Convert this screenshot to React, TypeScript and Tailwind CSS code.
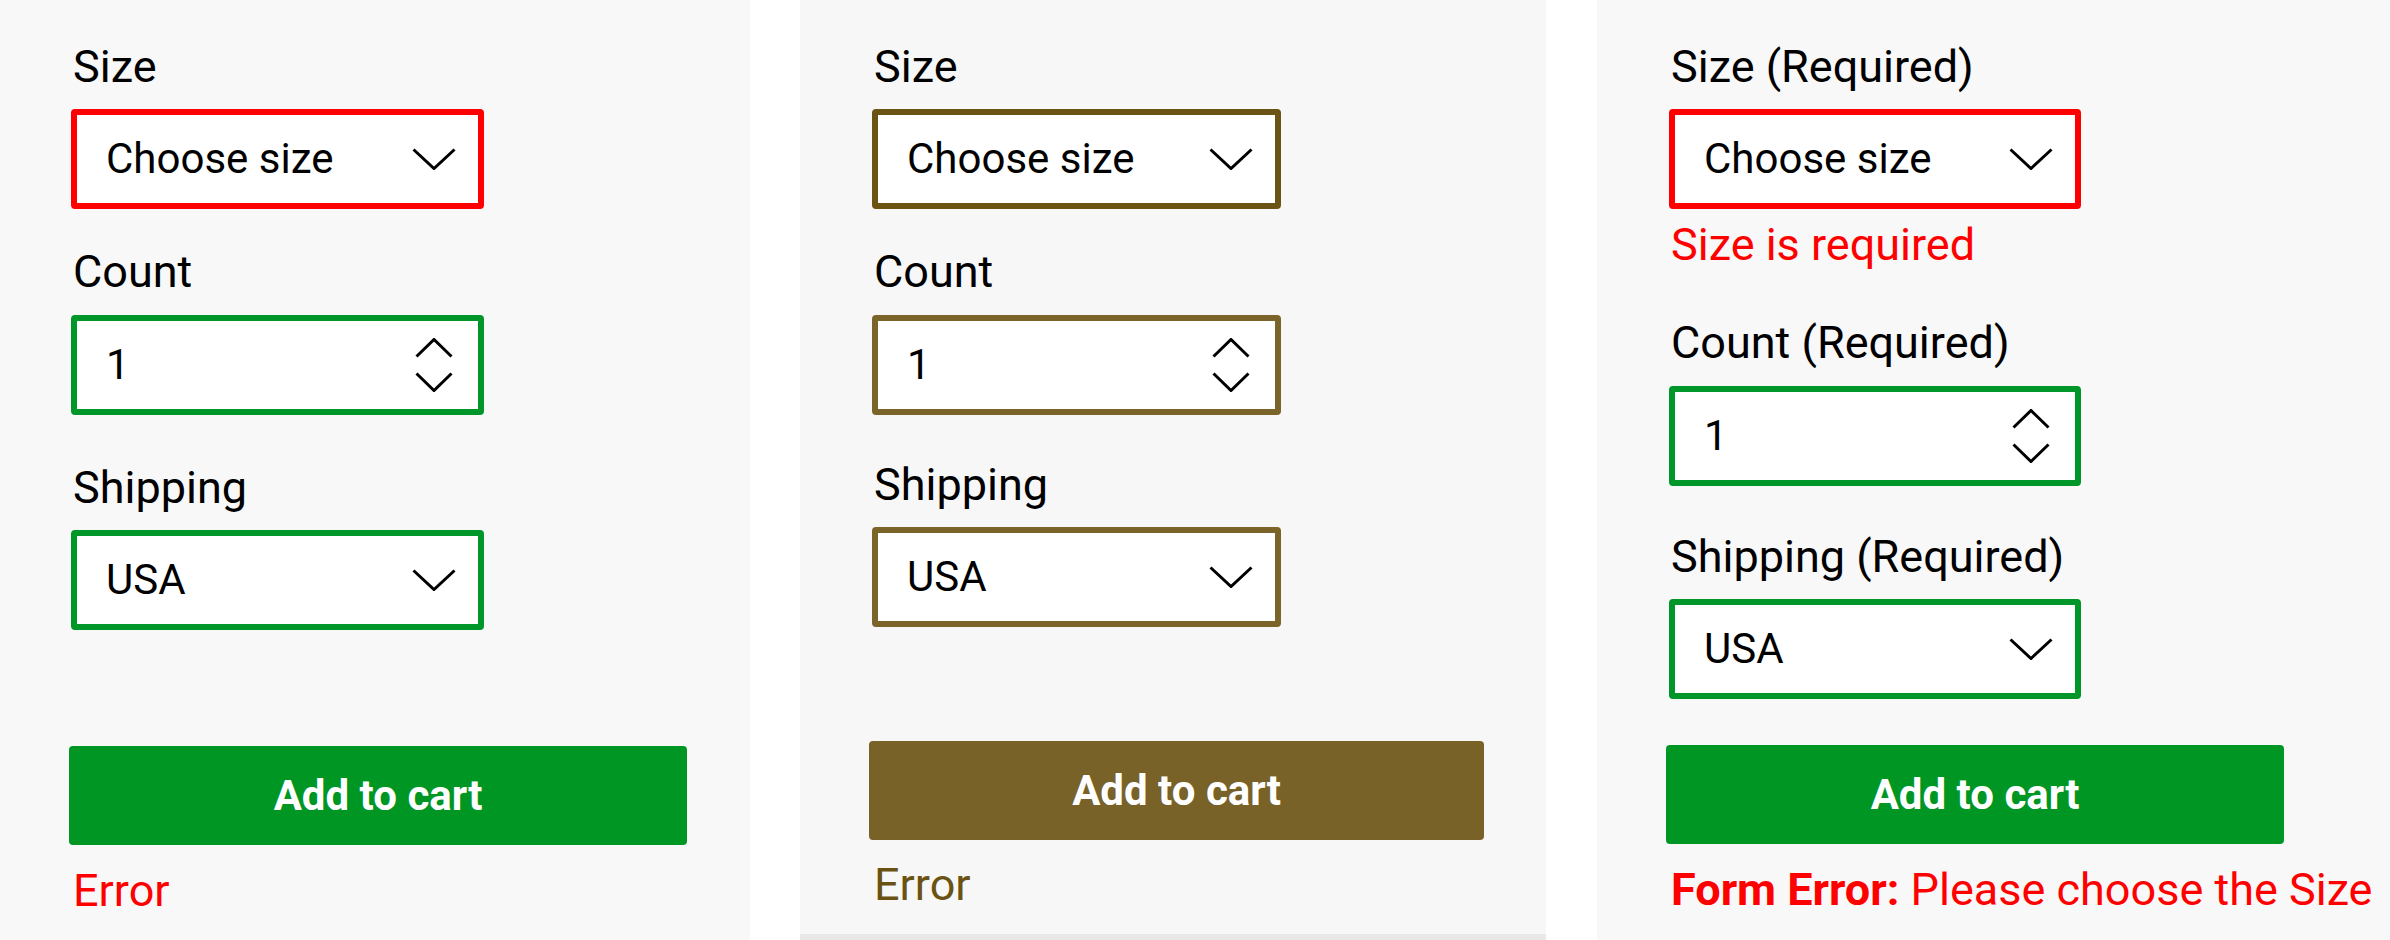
import React from "react";

type Theme = {
  ok: string;
  bad: string;
  button: string;
  error: string;
};

const green: Theme = {
  ok: "border-[#00962a]",
  bad: "border-[#ff0000]",
  button: "bg-[#009624]",
  error: "text-[#ff0000]",
};

const olive: Theme = {
  ok: "border-[#7a6429]",
  bad: "border-[#6b5413]",
  button: "bg-[#786227]",
  error: "text-[#6a5312]",
};

function ChevronDown() {
  return (
    <svg width="44" height="22" viewBox="0 0 44 22" fill="none">
      <path d="M1.5 1.5 L22 20.5 L42.5 1.5" stroke="#000" strokeWidth="3" />
    </svg>
  );
}

function Spinner() {
  return (
    <div className="flex flex-col items-center gap-[14px]">
      <svg width="38" height="20" viewBox="0 0 38 20" fill="none">
        <path d="M1.5 18.5 L19 1.5 L36.5 18.5" stroke="#000" strokeWidth="3" />
      </svg>
      <svg width="38" height="20" viewBox="0 0 38 20" fill="none">
        <path d="M1.5 1.5 L19 18.5 L36.5 1.5" stroke="#000" strokeWidth="3" />
      </svg>
    </div>
  );
}

function Label({ children, className = "" }: { children: React.ReactNode; className?: string }) {
  return <div className={`text-[45px] leading-[52px] text-black pl-[2px] ${className}`}>{children}</div>;
}

function Box({
  value,
  border,
  width,
  spinner,
  className = "",
}: {
  value: string;
  border: string;
  width: string;
  spinner?: boolean;
  className?: string;
}) {
  return (
    <div
      className={`h-[100px] ${width} border-[6px] ${border} rounded-[4px] bg-white flex items-center justify-between pl-[29px] pr-[22px] ${className}`}
    >
      <span className="text-[42px] text-black leading-none">{value}</span>
      <div className="w-[44px] flex justify-center">{spinner ? <Spinner /> : <ChevronDown />}</div>
    </div>
  );
}

function CartButton({ bg, width, className = "" }: { bg: string; width: string; className?: string }) {
  return (
    <button
      className={`h-[99px] ${width} ${bg} rounded-[4px] text-white font-bold text-[42px] flex items-center justify-center ${className}`}
    >
      Add to cart
    </button>
  );
}

export default function App() {
  return (
    <div className="w-[2390px] h-[940px] bg-white flex font-['Roboto',sans-serif] overflow-hidden">
      {/* Variant 1: green / red */}
      <div className="w-[750px] h-full bg-[#f8f8f8] pl-[71px] pt-[41px]">
        <Label>Size</Label>
        <Box value="Choose size" border={green.bad} width="w-[413px]" className="mt-[16px]" />
        <Label className="mt-[37px]">Count</Label>
        <Box value="1" border={green.ok} width="w-[413px]" spinner className="mt-[17px]" />
        <Label className="mt-[47px]">Shipping</Label>
        <Box value="USA" border={green.ok} width="w-[413px]" className="mt-[16px]" />
        <CartButton bg={green.button} width="w-[618px]" className="mt-[116px] -ml-[2px]" />
        <Label className="mt-[20px]">
          <span className={green.error}>Error</span>
        </Label>
      </div>

      <div className="w-[50px] shrink-0" />

      {/* Variant 2: olive */}
      <div className="w-[746px] h-full bg-[#f7f7f7] flex flex-col">
        <div className="flex-1 pl-[72px] pt-[41px]">
          <Label>Size</Label>
          <Box value="Choose size" border={olive.bad} width="w-[409px]" className="mt-[16px]" />
          <Label className="mt-[37px]">Count</Label>
          <Box value="1" border={olive.ok} width="w-[409px]" spinner className="mt-[17px]" />
          <Label className="mt-[44px]">Shipping</Label>
          <Box value="USA" border={olive.ok} width="w-[409px]" className="mt-[16px]" />
          <CartButton bg={olive.button} width="w-[615px]" className="mt-[114px] -ml-[3px]" />
          <Label className="mt-[19px]">
            <span className={olive.error}>Error</span>
          </Label>
        </div>
        <div className="h-[6px] bg-[#e8e8e8]" />
      </div>

      <div className="w-[51px] shrink-0" />

      {/* Variant 3: required labels */}
      <div className="flex-1 h-full bg-[#f8f8f8] pl-[72px] pt-[41px]">
        <Label>Size (Required)</Label>
        <Box value="Choose size" border={green.bad} width="w-[412px]" className="mt-[16px]" />
        <Label className="mt-[10px]">
          <span className={green.error}>Size is required</span>
        </Label>
        <Label className="mt-[46px]">Count (Required)</Label>
        <Box value="1" border={green.ok} width="w-[412px]" spinner className="mt-[17px]" />
        <Label className="mt-[45px]">Shipping (Required)</Label>
        <Box value="USA" border={green.ok} width="w-[412px]" className="mt-[16px]" />
        <CartButton bg={green.button} width="w-[618px]" className="mt-[46px] -ml-[3px]" />
        <Label className="mt-[20px] whitespace-nowrap">
          <span className={`font-bold ${green.error}`}>Form Error:</span>{" "}
          <span className={green.error}>Please choose the Size</span>
        </Label>
      </div>
    </div>
  );
}
